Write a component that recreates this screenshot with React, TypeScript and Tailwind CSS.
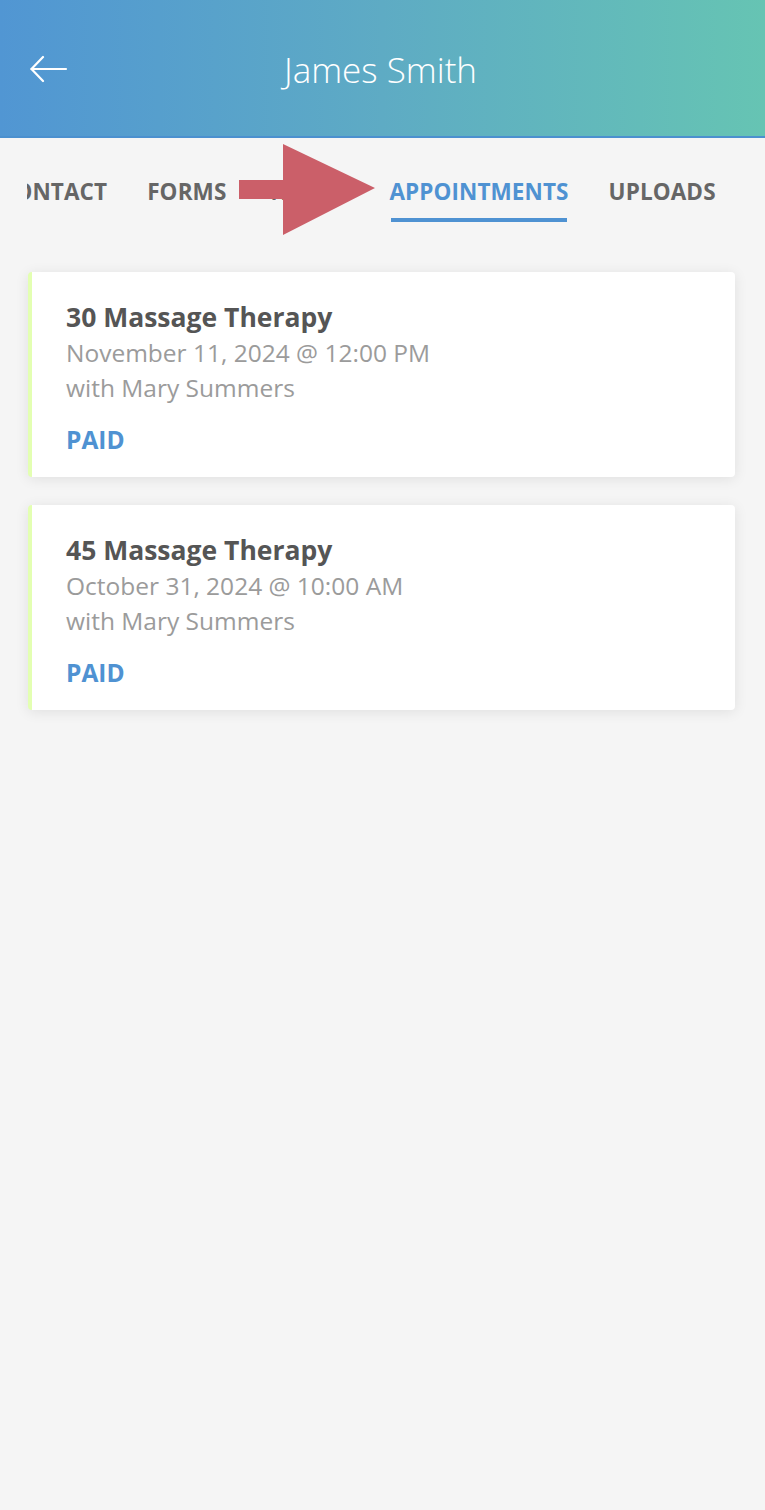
import React from "react";

const font = { fontFamily: '"Open Sans", "Noto Sans", sans-serif' };

const appointments = [
  { title: "30 Massage Therapy", when: "November 11, 2024 @ 12:00 PM", with: "with Mary Summers", status: "PAID" },
  { title: "45 Massage Therapy", when: "October 31, 2024 @ 10:00 AM", with: "with Mary Summers", status: "PAID" },
];

function BackArrow() {
  return (
    <svg width="38" height="28" viewBox="0 0 38 28" fill="none" stroke="white" strokeWidth="2.2" strokeLinecap="round" strokeLinejoin="round">
      <path d="M1.5 14 H36" />
      <path d="M13 2 L1.5 14 L13 26" />
    </svg>
  );
}

export default function App() {
  const tabs = ["CONTACT", "FORMS", "NOTES", "APPOINTMENTS", "UPLOADS"];

  return (
    <div className="min-h-[1510px] w-[765px] bg-[#f5f5f5]" style={font}>
      {/* Header */}
      <header className="h-[138px] bg-gradient-to-r from-[#5196d3] via-[#5eabc4] to-[#66c4b3] border-b-2 border-[#4b90cf] flex items-center relative">
        <div className="pl-[30px] pt-[1px]">
          <BackArrow />
        </div>
        <h1 className="absolute left-0 right-0 text-center text-white text-[35px] font-light top-[46px] leading-[48px] pr-[4px]">
          James Smith
        </h1>
      </header>

      {/* Tabs */}
      <div className="relative h-[110px]">
        <div className="ml-[27px] overflow-hidden pt-[39px]">
          <div className="flex gap-10 -ml-[27px] whitespace-nowrap">
            {tabs.map((t) => {
              const active = t === "APPOINTMENTS";
              return (
                <div key={t} className={`flex flex-col items-center shrink-0 ${t === "NOTES" ? "w-[83px] overflow-hidden" : ""}`}>
                  <span className={`text-[22.5px] font-bold leading-[30px] tracking-[0.1px] ${active ? "text-[#4f92d2]" : "text-[#666666]"}`}>
                    {t}
                  </span>
                  <span className={`mt-[11px] h-[4px] w-[calc(100%-4px)] ${active ? "bg-[#4f92d2]" : "bg-transparent"}`} />
                </div>
              );
            })}
          </div>
        </div>
        <svg className="absolute left-[239px] top-[6px]" width="137" height="92" viewBox="0 0 137 92">
          <polygon points="0,36 44,36 44,0 136,44 44,91 44,55 0,55" fill="#cb5f69" />
        </svg>
      </div>

      {/* Appointment cards */}
      <div className="flex flex-col gap-[28px] pl-[28px] pr-[30px] pt-[24px]">
        {appointments.map((a) => (
          <div key={a.when} className="bg-white rounded-[4px] border-l-[4px] border-[#e3ffb2] shadow-[0_2px_14px_rgba(0,0,0,0.09)] pl-[34px] pt-[27px] pb-[20px]">
            <div className="text-[26.5px] font-bold leading-[36px] text-[#555555]">{a.title}</div>
            <div className="text-[24.5px] leading-[36px] text-[#9b9b9b]">{a.when}</div>
            <div className="text-[24.5px] leading-[34px] text-[#9b9b9b]">{a.with}</div>
            <div className="mt-[18px] text-[24.5px] font-bold leading-[34px] text-[#4f92d2]">{a.status}</div>
          </div>
        ))}
      </div>
    </div>
  );
}
